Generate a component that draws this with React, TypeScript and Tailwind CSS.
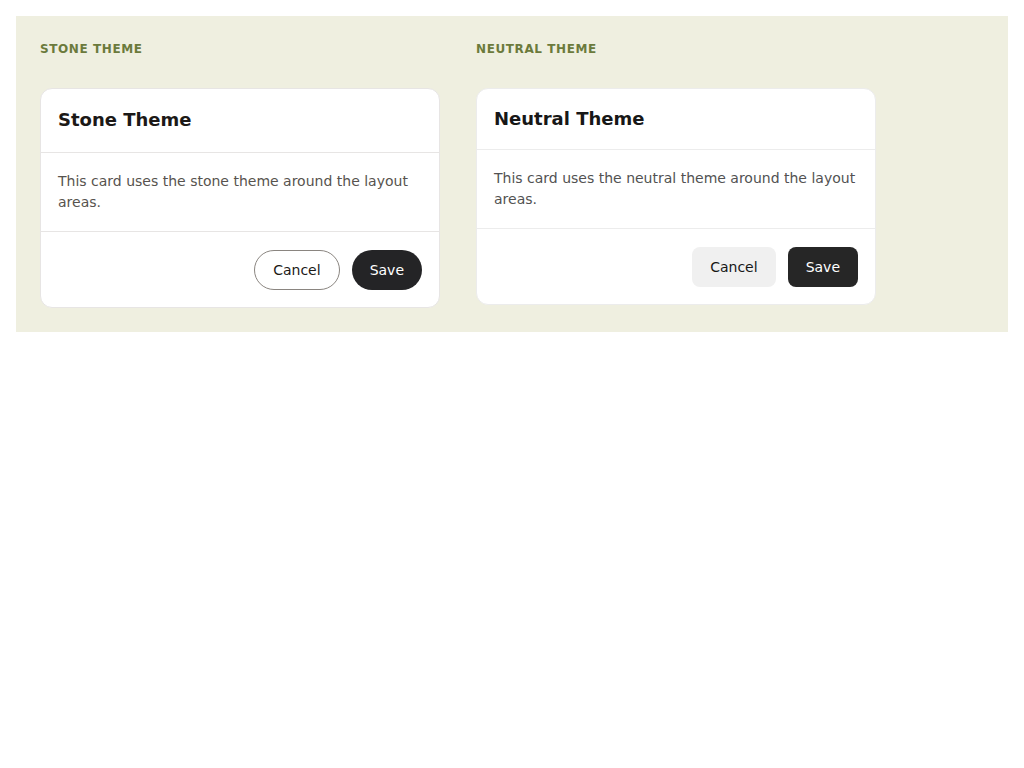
const font = { fontFamily: '"DejaVu Sans", sans-serif' }

function StoneCard() {
  return (
    <div className="w-[400px] rounded-xl border border-[#e7e5e4] bg-white">
      <div className="border-b border-[#e7e5e4] px-[17px] pt-[17px] pb-[18px]">
        <h2 className="text-lg leading-7 font-bold text-[#1c1917]">Stone Theme</h2>
      </div>
      <div className="border-b border-[#e7e5e4] px-[17px] py-[18px]">
        <p className="text-sm leading-[21px] text-[#57534e]">
          This card uses the stone theme around the layout areas.
        </p>
      </div>
      <div className="flex justify-end gap-3 px-[17px] pt-[18px] pb-[17px]">
        <button className="h-10 rounded-full border border-[#8a8580] bg-white px-[18px] text-sm text-[#1c1917]">
          Cancel
        </button>
        <button className="h-10 rounded-full bg-[#242426] px-[18px] text-sm text-white">
          Save
        </button>
      </div>
    </div>
  )
}

function NeutralCard() {
  return (
    <div className="w-[400px] rounded-xl border border-[#ececec] bg-white">
      <div className="border-b border-[#ececec] px-[17px] py-4">
        <h2 className="text-lg leading-7 font-bold text-[#171717]">Neutral Theme</h2>
      </div>
      <div className="border-b border-[#ececec] px-[17px] py-[18px]">
        <p className="text-sm leading-[21px] text-[#525252]">
          This card uses the neutral theme around the layout areas.
        </p>
      </div>
      <div className="flex justify-end gap-3 pt-[18px] pr-[17px] pb-[17px] pl-4">
        <button className="h-10 rounded-lg bg-[#f0f0f0] px-[18px] text-sm text-[#171717]">
          Cancel
        </button>
        <button className="h-10 rounded-lg bg-[#262626] px-[18px] text-sm text-white">
          Save
        </button>
      </div>
    </div>
  )
}

export default function App() {
  return (
    <div className="p-4" style={font}>
      <div className="flex gap-9 bg-[#efefe0] p-6">
        <section className="flex w-[400px] flex-col gap-[31px]">
          <h3 className="pt-px text-xs leading-4 font-bold tracking-[0.05em] text-[#6b7a3c]">STONE THEME</h3>
          <StoneCard />
        </section>
        <section className="flex w-[400px] flex-col gap-[31px]">
          <h3 className="pt-px text-xs leading-4 font-bold tracking-[0.05em] text-[#6b7a3c]">NEUTRAL THEME</h3>
          <NeutralCard />
        </section>
      </div>
    </div>
  )
}
